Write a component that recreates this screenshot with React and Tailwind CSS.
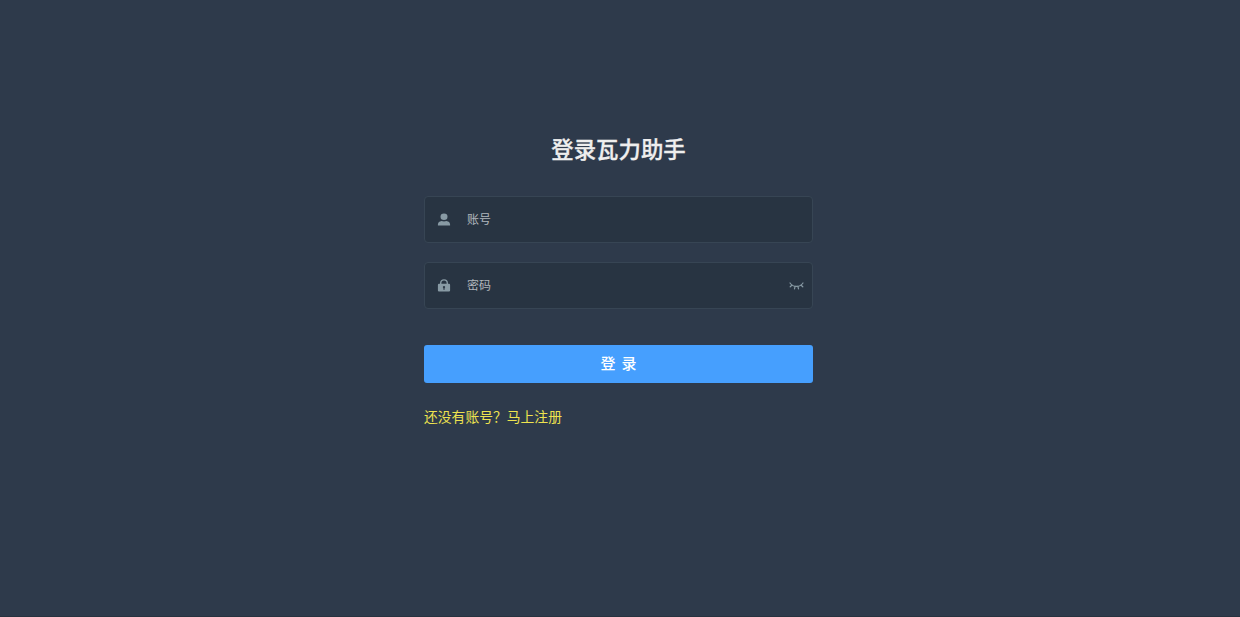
const fields = [
    { name: "username", type: "text", placeholder: "账号", icon: UserIcon },
    { name: "password", type: "password", placeholder: "密码", icon: LockIcon },
];

function UserIcon() {
    return (
        <svg width="14" height="14" viewBox="0 0 14 14" fill="currentColor">
            <ellipse cx="7" cy="3.8" rx="3.5" ry="3.3" />
            <path d="M0.9 12.5V11.6C0.9 9.5 2.4 8.3 4.5 8C6 8.5 8 8.5 9.5 8C11.6 8.3 13.1 9.5 13.1 11.6V12.5Z" />
        </svg>
    );
}

function LockIcon() {
    return (
        <svg width="14" height="14" viewBox="0 0 14 14" fill="currentColor">
            <path d="M3.7 6V4.2C3.7 2.1 5 0.9 7 0.9S10.3 2.1 10.3 4.2V6" fill="none" stroke="currentColor" strokeWidth="1.4" />
            <path
                fillRule="evenodd"
                d="M2 4.8H12A1.1 1.1 0 0 1 13.1 5.9V11.5A1.1 1.1 0 0 1 12 12.6H2A1.1 1.1 0 0 1 0.9 11.5V5.9A1.1 1.1 0 0 1 2 4.8ZM7 6.9A1.2 1.2 0 0 0 6.4 9.1V10.7H7.6V9.1A1.2 1.2 0 0 0 7 6.9Z"
            />
        </svg>
    );
}

function EyeClosedIcon() {
    return (
        <svg width="16" height="10" viewBox="0 0 16 10" fill="none" stroke="currentColor" strokeWidth="1.2" strokeLinecap="round">
            <path d="M2 2C5.2 6.6 11.8 6.6 15 2" />
            <path d="M3.9 4.2L2.2 5.8M7.1 5.4L6.5 7.8M9.9 5.4L10.5 7.8M13.1 4.2L14.8 5.8" />
        </svg>
    );
}

const App = () => {
    return (
        <div className="h-screen overflow-hidden bg-[#2e3a4b] border-b border-[#27323f] font-['Noto_Sans_CJK_SC',sans-serif]">
            <form className="w-[389px] ml-[424px] pt-[132px]">
                <h1 className="h-8 mb-8 text-center text-[22.4px] leading-8 font-medium text-[#eeeeee] [-webkit-text-stroke:0.3px_#eeeeee]">
                    登录瓦力助手
                </h1>

                {fields.map(({ name, type, placeholder, icon: Icon }) => (
                    <div
                        key={name}
                        className="flex items-center h-[47px] mb-[19px] pl-3 pr-2 rounded-[4px] border border-[#374554] bg-[#283442] text-[#889aa4]"
                    >
                        <Icon />
                        <input
                            type={type}
                            name={name}
                            placeholder={placeholder}
                            className="flex-1 min-w-0 h-[43px] ml-4 pb-[2px] bg-transparent text-xs text-white placeholder:text-[#b0b6bc] outline-none"
                        />
                        {type === "password" && <EyeClosedIcon />}
                    </div>
                ))}

                <button
                    type="button"
                    className="block w-full h-[38px] mt-[36px] pb-[2px] rounded-[3px] bg-[#469ffe] text-center text-[15px] leading-9 font-medium text-white"
                >
                    <span className="inline-flex gap-[6px]">
                        <span>登</span>
                        <span>录</span>
                    </span>
                </button>

                <a href="#" className="block mt-[23px] text-[13.8px] leading-5 text-[#eee34f]">
                    还没有账号？马上注册
                </a>
            </form>
        </div>
    );
};

export default App;
